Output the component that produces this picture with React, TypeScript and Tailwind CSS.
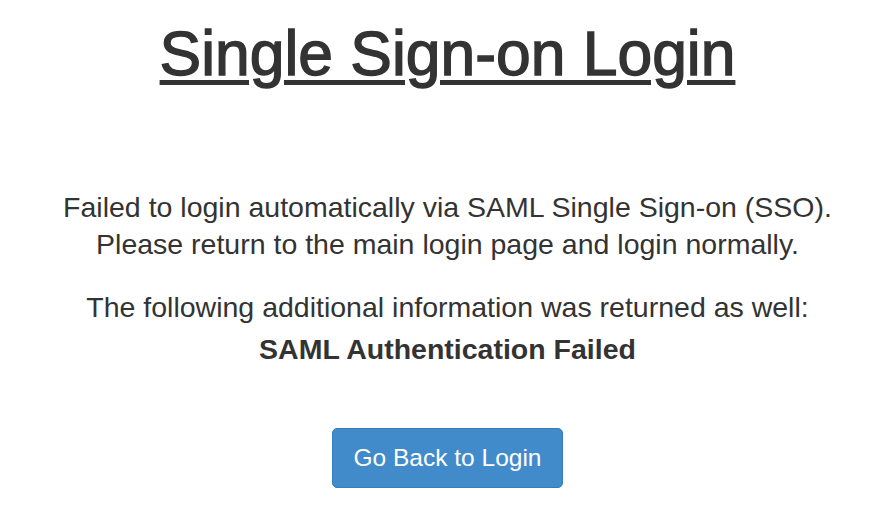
export default function App() {
  return (
    <div className="min-h-screen bg-white pl-[7px] text-[#333333] font-['Liberation_Sans',Arial,sans-serif] text-center">
      <div className="pt-[20px]">
        <h1 className="text-[62.4px] leading-[68px] font-normal [-webkit-text-stroke:1.4px_#333333] underline decoration-[5px] underline-offset-[5px]">
          Single Sign-on Login
        </h1>
      </div>
      <div className="mt-[101px] text-[28.5px] leading-[37px]">
        <p>
          Failed to login automatically via SAML Single Sign-on (SSO).
          <br />
          Please return to the main login page and login normally.
        </p>
        <div className="mt-[26px]">
          <p>The following additional information was returned as well:</p>
          <p className="mt-[5px] font-bold">SAML Authentication Failed</p>
        </div>
      </div>
      <div className="mt-[60px] flex justify-center">
        <button className="h-[60px] px-[21px] rounded-[5px] bg-[#428bca] border border-[#357ebd] text-white text-[24.5px] leading-none">
          Go Back to Login
        </button>
      </div>
    </div>
  );
}
